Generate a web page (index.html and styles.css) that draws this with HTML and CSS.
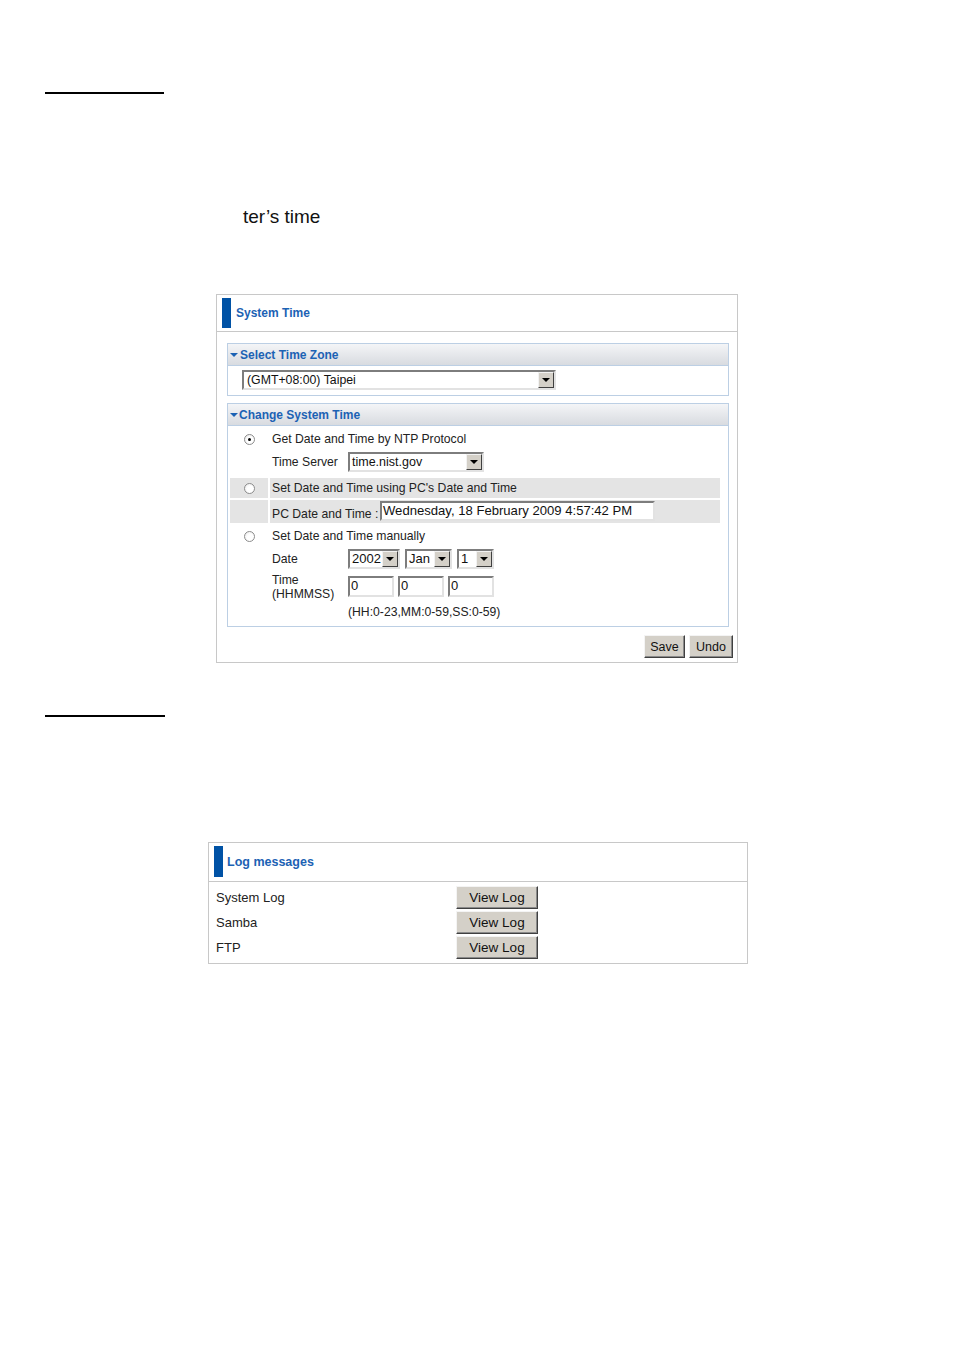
FILE: index.html
```html
<!DOCTYPE html>
<html>
<head>
<meta charset="utf-8">
<title>System Time</title>
<link rel="stylesheet" href="styles.css">
</head>
<body>
<div class="page">
  <div class="rule rule-top"></div>
  <p class="lead">ter’s time</p>

  <div class="panel panel-time">
    <div class="panel-head head-time"><span class="bar"></span><span class="panel-title">System Time</span></div>
    <div class="panel-body">
      <div class="section">
        <div class="section-head"><span class="tri"></span>Select Time Zone</div>
        <div class="tz-row">
          <span class="select w-tz"><span class="sel-val">(GMT+08:00) Taipei</span><span class="sel-btn"></span></span>
        </div>
      </div>

      <div class="section section-change">
        <div class="section-head"><span class="tri tri-b"></span>Change System Time</div>
        <table class="opts">
          <tr class="r1">
            <td class="rc"><span class="radio checked"></span></td>
            <td class="tc">Get Date and Time by NTP Protocol</td>
          </tr>
          <tr class="r2">
            <td class="rc"></td>
            <td class="tc top"><div class="line"><span class="lbl">Time Server</span><span class="select w-srv"><span class="sel-val">time.nist.gov</span><span class="sel-btn"></span></span></div></td>
          </tr>
          <tr class="r3 grey">
            <td class="rc"><span class="radio"></span></td>
            <td class="tc">Set Date and Time using PC's Date and Time</td>
          </tr>
          <tr class="r4 grey">
            <td class="rc"></td>
            <td class="tc top"><div class="line line-pc"><span class="lbl-pc">PC Date and Time :</span><span class="input w-pc">Wednesday, 18 February 2009 4:57:42 PM</span></div></td>
          </tr>
          <tr class="r5">
            <td class="rc"><span class="radio"></span></td>
            <td class="tc">Set Date and Time manually</td>
          </tr>
          <tr class="r6">
            <td class="rc"></td>
            <td class="tc"><div class="line"><span class="lbl">Date</span><span class="selgroup"><span class="select w-year"><span class="sel-val">2002</span><span class="sel-btn"></span></span><span class="select w-mon"><span class="sel-val">Jan</span><span class="sel-btn"></span></span><span class="select w-day"><span class="sel-val">1</span><span class="sel-btn"></span></span></span></div></td>
          </tr>
          <tr class="r7">
            <td class="rc"></td>
            <td class="tc top"><div class="line line-time"><span class="lbl lbl-2">Time<br>(HHMMSS)</span><span class="inputs"><span class="input w-t">0</span><span class="input w-t">0</span><span class="input w-t">0</span></span></div></td>
          </tr>
          <tr class="r8">
            <td class="rc"></td>
            <td class="tc hint">(HH:0-23,MM:0-59,SS:0-59)</td>
          </tr>
        </table>
      </div>

      <div class="actions">
        <button class="btn btn-save">Save</button>
        <button class="btn btn-undo">Undo</button>
      </div>
    </div>
  </div>

  <div class="rule rule-mid"></div>

  <div class="panel panel-log">
    <div class="panel-head head-log"><span class="bar bar-log"></span><span class="panel-title title-log">Log messages</span></div>
    <div class="log-rows">
      <span class="log-lbl">System Log</span><button class="btn btn-log">View Log</button>
      <span class="log-lbl">Samba</span><button class="btn btn-log">View Log</button>
      <span class="log-lbl">FTP</span><button class="btn btn-log">View Log</button>
    </div>
  </div>
</div>
</body>
</html>
```

FILE: styles.css
```css
* { box-sizing: border-box; }
html, body { margin: 0; padding: 0; background: #fff; }
body { font-family: "Liberation Sans", Arial, sans-serif; color: #222; }

.rule { height: 2px; background: #000; margin-left: 45px; }
.rule-top { margin-top: 92px; width: 119px; }
.rule-mid { margin-top: 52px; width: 120px; }

.lead { margin: 112px 0 0 243px; font-size: 19px; line-height: 22px; color: #111; }

.panel { border: 1px solid #c8c8c8; background: #fff; }
.panel-time { margin: 66px 0 0 216px; width: 522px; }
.panel-log { margin: 125px 0 0 208px; width: 540px; }

.panel-head { display: flex; align-items: flex-start; border-bottom: 1px solid #c8c8c8; }
.head-time { height: 37px; }
.head-log { height: 39px; }
.bar { width: 9px; height: 30px; margin: 3px 0 0 5px; background: #0052a5; }
.bar-log { height: 31px; }
.panel-title { align-self: center; margin-left: 5px; font-size: 12px; font-weight: bold; color: #1c62b4; }
.title-log { margin-left: 4px; font-size: 12.5px; }

.panel-body { padding: 11px 8px 4px 10px; }

.section { border: 1px solid #bccfe4; }
.section-change { margin-top: 7px; padding-bottom: 3px; }
.section-head {
  height: 22px;
  border-bottom: 1px solid #bccfe4;
  background: linear-gradient(#f4f5f7, #d8dbe0);
  display: flex; align-items: center;
  padding-left: 2px;
  font-size: 12px; font-weight: bold; color: #1c62b4;
}
.tri {
  width: 0; height: 0;
  border-left: 4px solid transparent;
  border-right: 4px solid transparent;
  border-top: 4px solid #1c62b4;
  margin-right: 2px;
}
.tri-b { margin-right: 1px; }

.tz-row { padding: 4px 0 5px 14px; height: 29px; }

/* select look */
.select {
  display: inline-flex; align-items: stretch;
  height: 20px;
  border: 2px solid; border-color: #7d7d7d #e2e2e2 #e2e2e2 #7d7d7d;
  background: #fff;
  vertical-align: top;
}
.sel-val { flex: 1; padding-left: 3px; font-size: 12.5px; line-height: 16px; color: #111; white-space: nowrap; overflow: hidden; }
.w-tz .sel-val { font-size: 12.3px; }
.w-srv .sel-val { padding-left: 2px; }
.w-year .sel-val, .w-mon .sel-val, .w-day .sel-val { padding-left: 2px; font-size: 13px; }
.sel-btn {
  width: 16px; flex: none;
  background: #d4d0c8;
  border: 1px solid; border-color: #f2f2f2 #404040 #404040 #f2f2f2;
  display: flex; align-items: center; justify-content: center;
}
.sel-btn::after {
  content: ""; width: 0; height: 0;
  border-left: 4px solid transparent;
  border-right: 4px solid transparent;
  border-top: 4px solid #000;
}
.w-tz { width: 314px; }
.w-srv { width: 136px; }
.w-year { width: 52px; }
.w-mon { width: 47px; }
.w-day { width: 37px; }

.input {
  display: inline-block;
  border: 2px solid; border-color: #7d7d7d #e2e2e2 #e2e2e2 #7d7d7d;
  background: #fff; color: #111;
  padding-left: 1px;
  white-space: nowrap; overflow: hidden;
}
.w-pc { width: 275px; height: 20px; font-size: 13.1px; line-height: 16px; }
.w-t { width: 46px; height: 21px; font-size: 13px; line-height: 16px; }

/* options table */
.opts { border-collapse: separate; border-spacing: 2px; width: 494px; font-size: 12.2px; color: #222; }
.opts td { padding: 0; vertical-align: middle; }
.opts .rc { width: 38px; text-align: center; }
.opts .tc { padding-left: 2px; white-space: nowrap; }
.opts .top { vertical-align: top; }
.grey td { background: #e4e4e4; }
.r1 td { height: 21px; }
.r2 td { height: 25px; }
.r2 .tc { padding-top: 1px; }
.r3 td { height: 20px; }
.r4 td { height: 23px; }
.r4 .tc { padding-top: 1px; }
.r5 td { height: 21px; }
.r6 td { height: 22px; }
.r7 td { height: 29px; }
.r8 td { height: 18px; }
.opts .hint { padding-left: 78px; }

.line { display: flex; align-items: center; }
.line-pc { align-items: flex-end; }
.line-time { align-items: flex-start; }
.lbl { width: 76px; flex: none; }
.lbl-2 { line-height: 14px; padding-top: 1px; }
.lbl-pc { width: 108px; flex: none; line-height: 14px; padding-bottom: 0; }
.selgroup, .inputs { display: flex; gap: 5px; }
.inputs { gap: 4px; margin-top: 4px; }

.radio {
  display: inline-block; vertical-align: middle;
  width: 11px; height: 11px; border-radius: 50%;
  border: 1px solid #8c8c8c;
  background: radial-gradient(circle at 60% 60%, #fff 40%, #e6e6e6 100%);
  position: relative;
}
.radio.checked::after {
  content: ""; position: absolute; left: 3px; top: 3px;
  width: 3px; height: 3px; border-radius: 50%; background: #000;
}

/* buttons */
.btn {
  font-family: "Liberation Sans", Arial, sans-serif;
  height: 23px; padding: 0;
  background: #d4d0c8; color: #111;
  border: 1px solid; border-color: #f4f4f4 #404040 #404040 #f4f4f4;
  box-shadow: inset -1px -1px 0 #8a8a8a;
}
.actions { display: flex; justify-content: flex-end; gap: 4px; margin: 8px -4px 0 0; }
.btn-save { width: 41px; font-size: 12.5px; }
.btn-undo { width: 44px; font-size: 12.5px; }

.log-rows {
  display: grid; grid-template-columns: 240px 82px; row-gap: 2px; align-items: center;
  padding: 4px 0 4px 7px;
}
.log-lbl { font-size: 13px; color: #222; }
.btn-log { width: 82px; font-size: 13.5px; }
```
